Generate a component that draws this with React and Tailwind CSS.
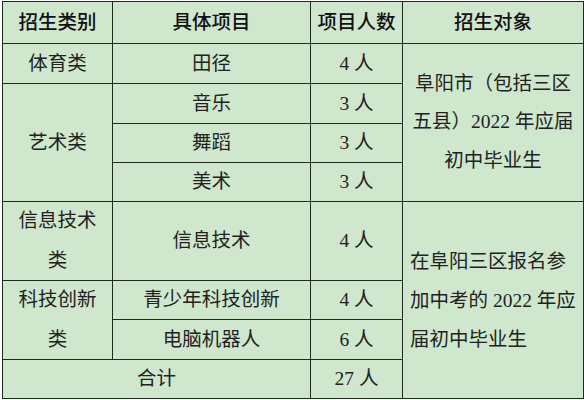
export default function App() {
  const cell = "bg-[#cfe7cc] flex items-center justify-center text-center";

  return (
    <div
      className="w-[584px] h-[400px] bg-white pl-[2px] pt-[1px] text-[19.5px] text-[#222]"
      style={{ fontFamily: '"Liberation Serif", "Noto Sans CJK SC", sans-serif' }}
    >
      <div className="grid grid-cols-[109px_197px_91px_180px] grid-rows-[41px_39px_39px_38px_38px_78px_38px_39px_38px] gap-px p-px bg-[#1f2a1f] w-fit">
        {/* header */}
        <div className={`${cell} font-medium text-[#111]`}>招生类别</div>
        <div className={`${cell} font-medium text-[#111]`}>具体项目</div>
        <div className={`${cell} font-medium text-[#111]`}>项目人数</div>
        <div className={`${cell} font-medium text-[#111]`}>招生对象</div>

        {/* 体育类 */}
        <div className={cell}>体育类</div>
        <div className={cell}>田径</div>
        <div className={cell}>4 人</div>
        <div className={`${cell} row-span-4 leading-[38.5px] whitespace-nowrap`}>
          <div>
            阜阳市（包括三区
            <br />
            五县）2022 年应届
            <br />
            初中毕业生
          </div>
        </div>

        {/* 艺术类 */}
        <div className={`${cell} row-span-3`}>艺术类</div>
        <div className={cell}>音乐</div>
        <div className={cell}>3 人</div>
        <div className={cell}>舞蹈</div>
        <div className={cell}>3 人</div>
        <div className={cell}>美术</div>
        <div className={cell}>3 人</div>

        {/* 信息技术类 */}
        <div className={`${cell} leading-[40px]`}>
          <div>
            信息技术
            <br />类
          </div>
        </div>
        <div className={cell}>信息技术</div>
        <div className={cell}>4 人</div>
        <div className="bg-[#cfe7cc] row-span-4 flex items-center pl-[7px] leading-[39px] whitespace-nowrap">
          <div>
            在阜阳三区报名参
            <br />
            加中考的 2022 年应
            <br />
            届初中毕业生
          </div>
        </div>

        {/* 科技创新类 */}
        <div className={`${cell} row-span-2 leading-[40px]`}>
          <div>
            科技创新
            <br />类
          </div>
        </div>
        <div className={cell}>青少年科技创新</div>
        <div className={cell}>4 人</div>
        <div className={cell}>电脑机器人</div>
        <div className={cell}>6 人</div>

        {/* 合计 */}
        <div className={`${cell} col-span-2`}>合计</div>
        <div className={cell}>27 人</div>
      </div>
    </div>
  );
}
